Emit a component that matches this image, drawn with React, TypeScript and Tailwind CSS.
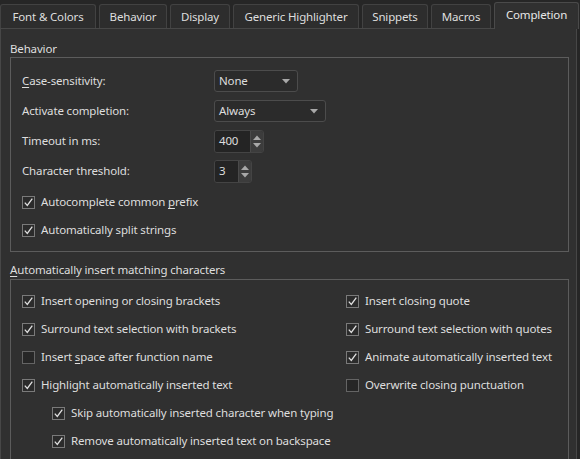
import React from "react";

const tabs = [
  { label: "Font & Colors", w: "w-[96px]" },
  { label: "Behavior", w: "w-[68px]" },
  { label: "Display", w: "w-[60px]" },
  { label: "Generic Highlighter", w: "w-[126px]" },
  { label: "Snippets", w: "w-[66px]" },
  { label: "Macros", w: "w-[60px]" },
];

function Check({ checked }: { checked: boolean }) {
  return (
    <span
      className={
        "w-[13px] h-[13px] shrink-0 border flex items-center justify-center " +
        (checked ? "border-[#7a7a7a] bg-[#2b2b2b]" : "border-[#646464] bg-[#262626]")
      }
    >
      {checked && (
        <svg width="11" height="11" viewBox="0 0 11 11">
          <path d="M1.8 5.6 L4.3 8.4 L9.3 1.6" fill="none" stroke="#e0e0e0" strokeWidth="1.3" />
        </svg>
      )}
    </span>
  );
}

function CheckRow({
  checked,
  children,
  className = "",
}: {
  checked: boolean;
  children: React.ReactNode;
  className?: string;
}) {
  return (
    <div className={"h-[20px] flex items-center gap-[6px] whitespace-nowrap " + className}>
      <Check checked={checked} />
      <span>{children}</span>
    </div>
  );
}

function Combo({ value, w }: { value: string; w: string }) {
  return (
    <div
      className={
        w +
        " h-[22px] rounded-[3px] border border-[#4c4c4c] bg-[#2b2b2b] flex items-center justify-between pl-[4px] pr-[7px]"
      }
    >
      <span>{value}</span>
      <svg width="8" height="5" viewBox="0 0 8 5">
        <path d="M0 0 H8 L4 4.5 Z" fill="#a8a8a8" />
      </svg>
    </div>
  );
}

function Spin({ value, w }: { value: string; w: string }) {
  return (
    <div className="h-[23px] flex rounded-[3px] border border-[#444] overflow-hidden">
      <div className={w + " bg-[#242424] flex items-center pl-[4px]"}>{value}</div>
      <div className="w-[13px] bg-[#3c3c3c] border-l border-[#4a4a4a] flex flex-col items-center justify-center gap-[3px]">
        <svg width="8" height="5" viewBox="0 0 8 5">
          <path d="M0 5 H8 L4 0.5 Z" fill="#a8a8a8" />
        </svg>
        <svg width="8" height="5" viewBox="0 0 8 5">
          <path d="M0 0 H8 L4 4.5 Z" fill="#a8a8a8" />
        </svg>
      </div>
    </div>
  );
}

function FormRow({ label, children }: { label: React.ReactNode; children: React.ReactNode }) {
  return (
    <div className="flex items-center h-[22px]">
      <div className="w-[192px]">{label}</div>
      {children}
    </div>
  );
}

export default function App() {
  return (
    <div
      className="w-[580px] h-[459px] overflow-hidden bg-[#262626] text-[#dedede] text-[11.5px] tracking-[-0.15px] flex flex-col"
      style={{ fontFamily: '"Noto Sans", "Open Sans", sans-serif' }}
    >
      {/* Tab bar */}
      <div className="h-[28px] flex items-end gap-[3px] shrink-0">
        {tabs.map((t) => (
          <div
            key={t.label}
            className={
              t.w +
              " h-[24px] rounded-t-[3px] border border-b-0 border-[#424242] bg-[#2d2d2d] flex items-center justify-center whitespace-nowrap"
            }
          >
            {t.label}
          </div>
        ))}
        <div className="w-[85px] h-[27px] -mb-[1px] relative z-10 rounded-t-[3px] border border-b-0 border-[#4a4a4a] bg-[#303030] flex items-center justify-center pb-[2px] whitespace-nowrap text-[#e8e8e8]">
          Completion
        </div>
      </div>

      {/* Pane */}
      <div className="flex-1 w-[577px] bg-[#303030] border-t border-l border-r border-[#474747] pl-[9px] pr-[7px]">
        <div className="mt-[11px] h-[17px] leading-[17px]">Behavior</div>
        <div className="border border-[#5c5c5c] pl-[11px] pt-[12px] pb-[11px] flex flex-col gap-[8px]">
          <FormRow
            label={
              <span>
                <span className="underline underline-offset-2">C</span>ase-sensitivity:
              </span>
            }
          >
            <Combo value="None" w="w-[84px]" />
          </FormRow>
          <FormRow label="Activate completion:">
            <Combo value="Always" w="w-[112px]" />
          </FormRow>
          <FormRow label="Timeout in ms:">
            <Spin value="400" w="w-[35px]" />
          </FormRow>
          <FormRow label="Character threshold:">
            <Spin value="3" w="w-[23px]" />
          </FormRow>
          <CheckRow checked className="mt-[2px]">
            Autocomplete common <span className="underline underline-offset-2">p</span>refix
          </CheckRow>
          <CheckRow checked>Automatically split strings</CheckRow>
        </div>

        <div className="mt-[9px] mb-[1px] h-[17px] leading-[17px]">
          <span className="underline underline-offset-2">A</span>utomatically insert matching characters
        </div>
        <div className="border border-[#5c5c5c] pl-[11px] pt-[11px] pb-[11px] grid grid-cols-[324px_1fr] gap-y-[8px]">
          <CheckRow checked>Insert opening or closing brackets</CheckRow>
          <CheckRow checked>Insert closing quote</CheckRow>
          <CheckRow checked>Surround text selection with brackets</CheckRow>
          <CheckRow checked>Surround text selection with quotes</CheckRow>
          <CheckRow checked={false}>
            Insert <span className="underline underline-offset-2">s</span>pace after function name
          </CheckRow>
          <CheckRow checked>Animate automatically inserted text</CheckRow>
          <CheckRow checked>Highlight automatically inserted text</CheckRow>
          <CheckRow checked={false}>Overwrite closing punctuation</CheckRow>
          <div className="col-span-2 pl-[30px]">
            <CheckRow checked>Skip automatically inserted character when typing</CheckRow>
          </div>
          <div className="col-span-2 pl-[30px]">
            <CheckRow checked>Remove automatically inserted text on backspace</CheckRow>
          </div>
        </div>
      </div>
    </div>
  );
}
